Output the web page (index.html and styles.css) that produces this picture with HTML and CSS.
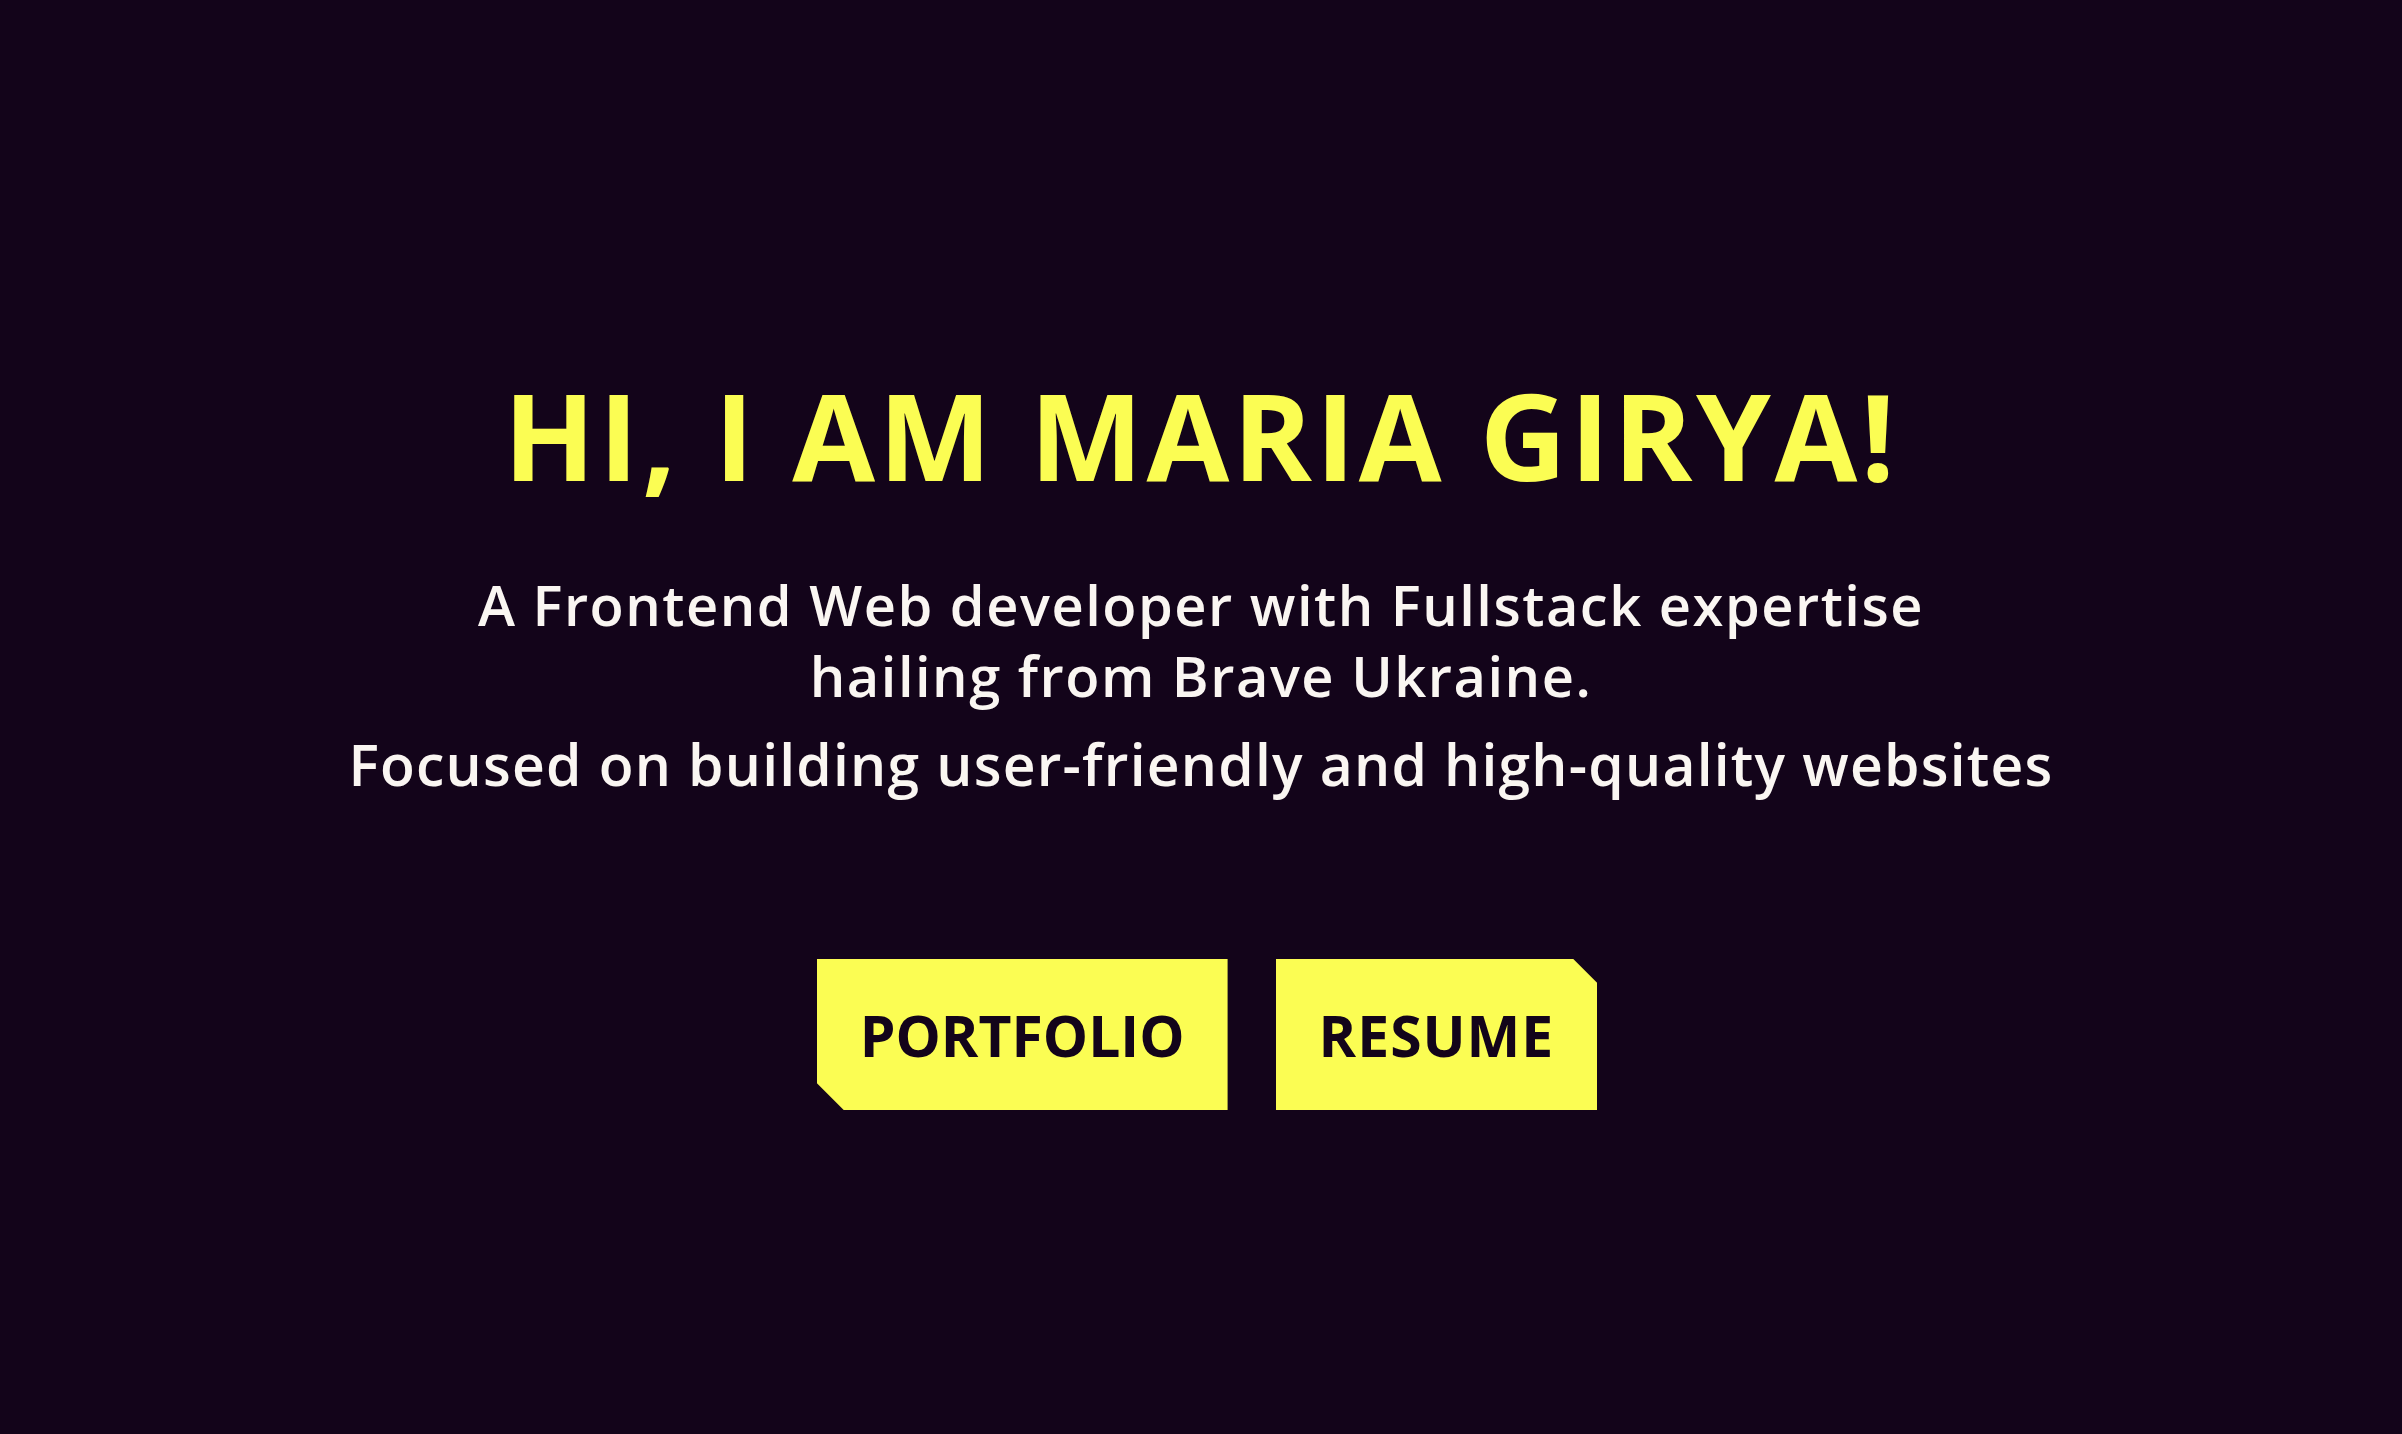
FILE: index.html
```html
<!DOCTYPE html>
<html lang="en">
<head>
<meta charset="utf-8">
<title>Maria Girya</title>
<link rel="stylesheet" href="styles.css">
</head>
<body>
<main class="hero">
  <h1 class="hero-title">HI, I AM MARIA GIRYA!</h1>
  <p class="hero-lead">A Frontend Web developer with Fullstack expertise<br>hailing from Brave Ukraine.</p>
  <p class="hero-focus">Focused on building user-friendly and high-quality websites</p>
  <div class="hero-actions">
    <a class="btn btn-portfolio" href="#portfolio">PORTFOLIO</a>
    <a class="btn btn-resume" href="#resume">RESUME</a>
  </div>
</main>
</body>
</html>
```
FILE: styles.css
```css
html, body {
  margin: 0;
  padding: 0;
}
body {
  background: #13041a;
  min-height: 100vh;
  font-family: "Open Sans", "Liberation Sans", sans-serif;
}
.hero {
  display: flex;
  flex-direction: column;
  align-items: center;
  padding-top: 363px;
  text-align: center;
}
.hero-title {
  margin: 0;
  font-size: 120px;
  line-height: 144px;
  font-weight: 700;
  letter-spacing: 3.5px;
  color: #fbfd53;
}
.hero-lead {
  margin: 62px 0 0;
  font-size: 56px;
  line-height: 71px;
  font-weight: 600;
  letter-spacing: 1.5px;
  color: #faf6f2;
}
.hero-focus {
  margin: 18px 0 0;
  font-size: 57px;
  line-height: 71px;
  font-weight: 600;
  letter-spacing: 1.2px;
  color: #faf6f2;
}
.hero-actions {
  display: flex;
  gap: 48px;
  margin-top: 159px;
  padding-left: 12px;
}
.btn {
  display: block;
  background: #fbfd53;
  color: #13041a;
  text-decoration: none;
  font-size: 57px;
  line-height: 57px;
  font-weight: 700;
  padding: 48px 43px 46px;
}
.btn-portfolio {
  clip-path: polygon(0 0, 100% 0, 100% 100%, 27px 100%, 0 calc(100% - 27px));
}
.btn-resume {
  letter-spacing: 1px;
  clip-path: polygon(0 0, calc(100% - 24px) 0, 100% 24px, 100% 100%, 0 100%);
}
```
